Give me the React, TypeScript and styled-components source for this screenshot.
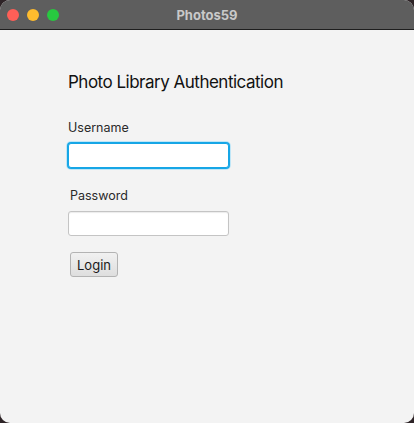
import React from 'react';
import styled, { createGlobalStyle } from 'styled-components';

const GlobalStyle = createGlobalStyle`
  html, body {
    margin: 0;
    padding: 0;
    background: #2e2427;
  }
  * {
    box-sizing: border-box;
  }
`;

const Window = styled.div`
  width: 414px;
  height: 423px;
  border-radius: 10px;
  overflow: hidden;
  display: flex;
  flex-direction: column;
  background: #f3f3f3;
  font-family: Inter, 'Noto Sans', sans-serif;
`;

const TitleBar = styled.header`
  position: relative;
  height: 30px;
  flex-shrink: 0;
  display: flex;
  align-items: center;
  justify-content: center;
  background: #5e5e5e;
  border-bottom: 1px solid #1e1e1e;
`;

const Lights = styled.div`
  position: absolute;
  left: 7px;
  top: 9px;
  display: flex;
  gap: 8px;
`;

const Light = styled.span<{ $color: string }>`
  width: 12px;
  height: 12px;
  border-radius: 50%;
  background: ${(p) => p.$color};
`;

const Title = styled.span`
  color: #c9c9c9;
  font-size: 13px;
  font-weight: 700;
`;

const Content = styled.main`
  flex: 1;
  display: flex;
  flex-direction: column;
  align-items: flex-start;
  padding: 41px 0 0 68px;
`;

const Heading = styled.h1`
  margin: 0 0 27px;
  font-size: 17px;
  font-weight: 400;
  line-height: 22px;
  letter-spacing: -0.5px;
  color: #111;
`;

const Label = styled.label<{ $indent?: number }>`
  font-size: 12.5px;
  line-height: 16px;
  color: #2a2a2a;
  margin: 0 0 7px ${(p) => p.$indent ?? 0}px;
`;

const Input = styled.input<{ $focused?: boolean }>`
  width: 161px;
  height: 25px;
  margin-bottom: 20px;
  padding: 0 6px;
  border-radius: 3px;
  background: #fff;
  outline: none;
  font: inherit;
  font-size: 13px;
  border: 1px solid ${(p) => (p.$focused ? '#16a6e6' : '#c4c4c4')};
  box-shadow: ${(p) => (p.$focused ? '0 0 0 1px #16a6e6, 0 0 0 2px #bfe6f7' : 'inset 0 1px 1px #ececec')};
`;

const Button = styled.button`
  margin: -4px 0 0 2px;
  width: 48px;
  height: 25px;
  padding: 0;
  border-radius: 3px;
  border: 1px solid #b3b3b3;
  background: linear-gradient(#f1f1f1, #dedede);
  font: inherit;
  font-size: 13px;
  color: #1a1a1a;
`;

export default function App() {
  return (
    <>
      <GlobalStyle />
      <Window>
        <TitleBar>
          <Lights>
            <Light $color="#fe5f57" />
            <Light $color="#febc2e" />
            <Light $color="#28c840" />
          </Lights>
          <Title>Photos59</Title>
        </TitleBar>
        <Content>
          <Heading>Photo Library Authentication</Heading>
          <Label>Username</Label>
          <Input $focused />
          <Label $indent={2}>Password</Label>
          <Input type="password" />
          <Button>Login</Button>
        </Content>
      </Window>
    </>
  );
}
